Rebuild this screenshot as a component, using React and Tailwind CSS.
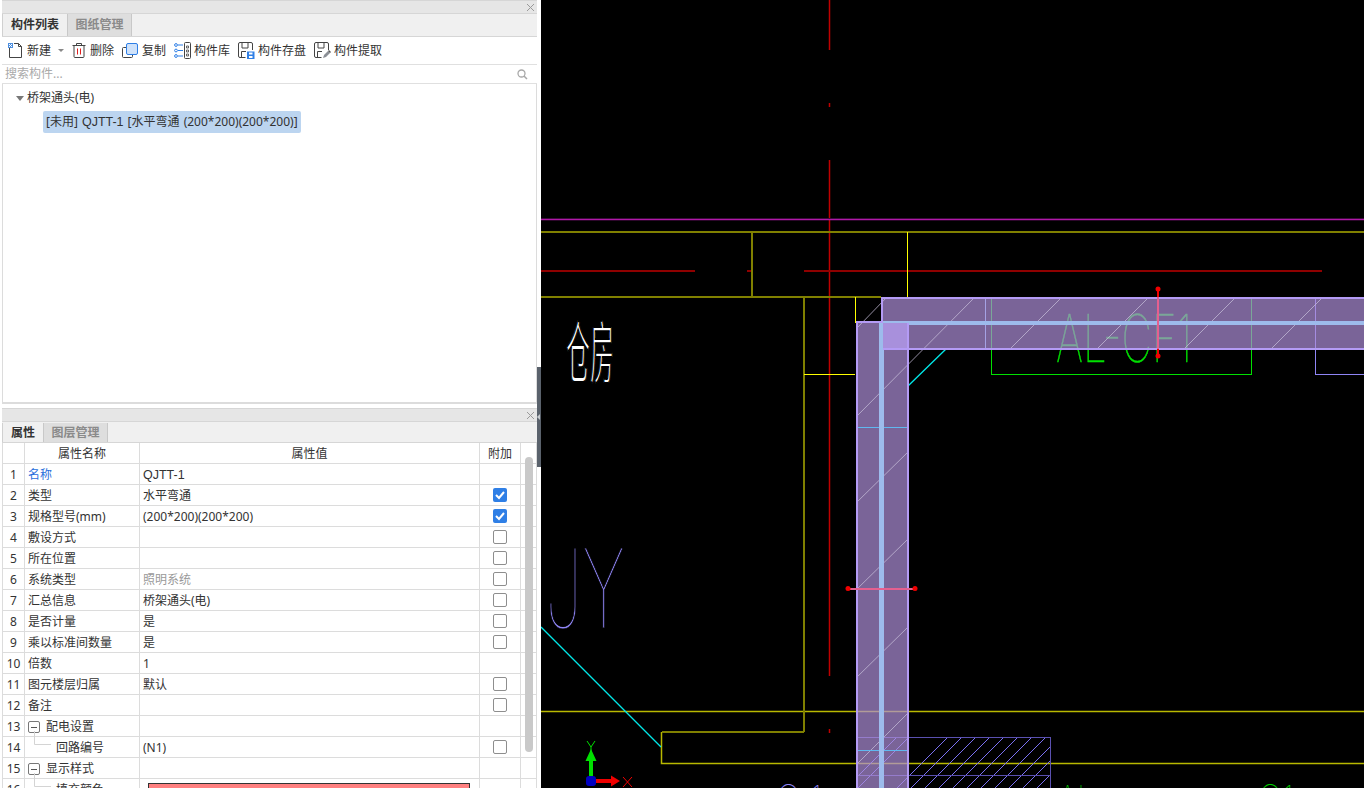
import React from "react";

const Latin = ({ children }) => (
  <span className="[font-family:'Liberation_Sans',sans-serif] text-[12.500px]">{children}</span>
);

const rows = [
  { n: 1, name: "名称", value: <Latin>QJTT-1</Latin>, blue: true },
  { n: 2, name: "类型", value: "水平弯通", check: "on" },
  { n: 3, name: "规格型号(mm)", value: "(200*200)(200*200)", check: "on" },
  { n: 4, name: "敷设方式", value: "", check: "off" },
  { n: 5, name: "所在位置", value: "", check: "off" },
  { n: 6, name: "系统类型", value: "照明系统", check: "off", gray: true },
  { n: 7, name: "汇总信息", value: "桥架通头(电)", check: "off" },
  { n: 8, name: "是否计量", value: "是", check: "off" },
  { n: 9, name: "乘以标准间数量", value: "是", check: "off" },
  { n: 10, name: "倍数", value: "1" },
  { n: 11, name: "图元楼层归属", value: "默认", check: "off" },
  { n: 12, name: "备注", value: "", check: "off" },
  { n: 13, name: "配电设置", value: "", group: true },
  { n: 14, name: "回路编号", value: "(N1)", check: "off", child: true },
  { n: 15, name: "显示样式", value: "", group: true },
  { n: 16, name: "填充颜色", value: "", child: true, swatch: true },
];

const NewIcon = () => (
  <svg width="17" height="17" viewBox="0 0 17 17" fill="none">
    <path d="M2.500 6v9.500h12V4.500L11.500 1.500H7" stroke="#444" />
    <path d="M11.500 1.500v3h3" stroke="#444" />
    <path d="M1 1h5v5H1z" fill="#4d8fe0" />
    <path d="M2 2h1v1H2zM4 2h1v1H4zM3 3h1v1H3zM2 4h1v1H2zM4 4h1v1H4z" fill="#fff" />
  </svg>
);

const TrashIcon = () => (
  <svg width="16" height="17" viewBox="0 0 15 17" fill="none">
    <path d="M1 3.500h13M5 3.500V1.500h5v2M2.500 3.500v11a1 1 0 0 0 1 1h8a1 1 0 0 0 1-1v-11" stroke="#444" />
    <path d="M6 6.500v6M9 6.500v6" stroke="#e02020" />
  </svg>
);

const CopyIcon = () => (
  <svg width="17" height="17" viewBox="0 0 17 17" fill="none">
    <path d="M4 5.500H1.500a1 1 0 0 0-1 1v8a1 1 0 0 0 1 1h8a1 1 0 0 0 1-1V13" stroke="#444" />
    <rect x="4.500" y="1.500" width="11" height="11" rx="1.500" fill="#cfe2fa" stroke="#2f7fe6" />
  </svg>
);

const LibraryIcon = () => (
  <svg width="17" height="17" viewBox="0 0 17 17" fill="none">
    <circle cx="2" cy="3" r="1.400" stroke="#2f7fe6" />
    <circle cx="2" cy="8.500" r="1.400" stroke="#2f7fe6" />
    <circle cx="2" cy="14" r="1.400" stroke="#2f7fe6" />
    <path d="M4 3h5M4 8.500h5M4 14h5" stroke="#2f7fe6" />
    <rect x="10.500" y="0.500" width="6" height="16" rx="1" stroke="#444" />
    <path d="M12.500 4h2v2h-2zM12.500 8h2v2h-2zM12.500 12h2v2h-2z" stroke="#444" strokeWidth="0.800" />
  </svg>
);

const SaveIcon = () => (
  <svg width="17" height="17" viewBox="0 0 17 17" fill="none">
    <path d="M7.500 15.500H2A1.500 1.500 0 0 1 .5 14V2A1.500 1.500 0 0 1 2 .5h11A1.500 1.500 0 0 1 14.500 2v6" stroke="#444" />
    <path d="M4 1v5h6V1M3.500 15V9.500H8" stroke="#444" />
    <path d="M9 9.500h7.500v7.500H9z" fill="#2f7fe6" />
    <path d="M11 10.500h3.500v2H11zM11 14h3.500v2H11z" fill="#fff" />
  </svg>
);

const ExtractIcon = () => (
  <svg width="17" height="17" viewBox="0 0 17 17" fill="none">
    <path d="M7.500 15.500H2A1.500 1.500 0 0 1 .5 14V2A1.500 1.500 0 0 1 2 .5h11A1.500 1.500 0 0 1 14.500 2v6" stroke="#444" />
    <path d="M4 1v5h6V1M3.500 15V9.500H8" stroke="#444" />
    <path d="M9 16l1-3 4-4 2 2-4 4z" fill="#8b8f96" />
    <path d="M14 9l1-1 2 2-1 1z" fill="#555" />
  </svg>
);

const tools = [
  { icon: <NewIcon />, label: "新建", w: "w-[31px]", caret: true },
  { icon: <TrashIcon />, label: "删除", w: "w-[32px]" },
  { icon: <CopyIcon />, label: "复制", w: "w-[32px]" },
  { icon: <LibraryIcon />, label: "构件库", w: "w-[44px]" },
  { icon: <SaveIcon />, label: "构件存盘", w: "w-[56px]" },
  { icon: <ExtractIcon />, label: "构件提取", w: "w-[56px]" },
];

const CloseX = () => (
  <svg width="9" height="9" viewBox="0 0 9 9" fill="none">
    <path d="M1 1l7 7M8 1l-7 7" stroke="#9a9a9a" />
  </svg>
);

const Checkbox = ({ on }) =>
  on ? (
    <div className="flex h-[14px] w-[14px] items-center justify-center rounded-[2px] bg-[#2f7fe6]">
      <svg width="12" height="12" viewBox="0 0 12 12" fill="none">
        <path d="M2 6l3 3 5-6" stroke="#fff" strokeWidth="2" />
      </svg>
    </div>
  ) : (
    <div className="h-[14px] w-[14px] rounded-[2px] border border-[#8e8e8e] bg-white" />
  );

const TitleBar = () => (
  <div className="flex h-[14px] shrink-0 items-center justify-end border-y border-[#d6d6d6] bg-[#e6e6e6] pr-[2px]">
    <CloseX />
  </div>
);

const PropRow = ({ row }) => (
  <div className="flex h-[21px] shrink-0 border-b border-[#dcdcdc] text-[12px] text-[#333]">
    <div className="flex w-[22px] shrink-0 items-center justify-center border-r border-[#dcdcdc] pt-[2px]">{row.n}</div>
    <div
      className={`relative flex w-[115px] shrink-0 items-center border-r border-[#dcdcdc] pt-[2px] ${row.child ? "pl-[31px]" : "pl-[3px]"} ${row.blue ? "text-[#2a6fdc]" : ""}`}
    >
      {row.group && (
        <span className="mr-[6px] flex h-[12px] w-[12px] items-center justify-center rounded-[2px] border border-[#777]">
          <span className="h-px w-[6px] bg-[#555]" />
        </span>
      )}
      {row.child && (
        <svg className="absolute left-[9px] top-[-6px]" width="20" height="18" viewBox="0 0 20 18" fill="none">
          <path d="M0.500 0v13.500H17" stroke="#d4d4d4" />
        </svg>
      )}
      {row.name}
    </div>
    <div className={`flex w-[340px] shrink-0 items-center border-r border-[#dcdcdc] pl-[3px] pt-[2px] ${row.gray ? "text-[#999]" : ""}`}>
      {row.swatch ? (
        <div className="ml-[5px] mt-[6px] h-[20px] w-[322px] shrink-0 border border-[#333] bg-[#ff8080]" />
      ) : (
        row.value
      )}
    </div>
    <div className="flex w-[41px] shrink-0 items-center justify-center border-r border-[#dcdcdc]">
      {row.check && <Checkbox on={row.check === "on"} />}
    </div>
  </div>
);

const ListPanel = () => (
  <section className="flex h-[404px] shrink-0 flex-col border-b-2 border-[#dcdcdc] bg-white">
    <TitleBar />
    <div className="flex h-[23px] shrink-0 border-b border-[#d6d6d6] bg-[#f0f0f0] text-[12px]">
      <div className="flex w-[65px] items-center justify-center border-l border-[#d0d0d0] font-bold text-[#333]">构件列表</div>
      <div className="flex w-[65px] items-center justify-center border-x border-[#c8c8c8] bg-[#dedede] font-bold text-[#8a8a8a]">图纸管理</div>
    </div>
    <div className="flex h-[28px] shrink-0 items-center border-b border-[#e0e0e0] pl-[5px] text-[12px] text-[#333]">
      {tools.map((t) => (
        <div key={t.label} className="flex items-center">
          {t.icon}
          <span className={`ml-[3px] ${t.w}`}>{t.label}</span>
          {t.caret && <span className="mr-[7px] h-0 w-0 border-x-[3px] border-t-[3px] border-x-transparent border-t-[#888]" />}
        </div>
      ))}
    </div>
    <div className="flex h-[19px] shrink-0 items-center justify-between border-b border-[#e0e0e0] pl-[3px] pr-[9px] text-[12px] text-[#aaa]">
      <span>搜索构件...</span>
      <svg width="11" height="11" viewBox="0 0 11 11" fill="none">
        <circle cx="4.500" cy="4.500" r="3.500" stroke="#a8a8a8" strokeWidth="1.300" />
        <path d="M7 7l3 3" stroke="#a8a8a8" strokeWidth="1.500" />
      </svg>
    </div>
    <div className="flex-1 border-x border-[#dcdcdc] text-[12px] text-[#333]">
      <div className="mt-[5px] flex h-[18px] items-center pl-[13px]">
        <span className="mr-[3px] h-0 w-0 border-x-[4px] border-t-[5px] border-x-transparent border-t-[#777]" />
        桥架通头(电)
      </div>
      <div className="ml-[40px] mt-[4px] flex h-[22px] w-[258px] items-center gap-[4px] rounded-[2px] bg-[#bcd5f0] pl-[3px] whitespace-nowrap">
        <span>[未用]</span>
        <Latin>QJTT-1</Latin>
        <span className="[word-spacing:1px]">[水平弯通 (200*200)(200*200)]</span>
      </div>
    </div>
  </section>
);

const PropsPanel = () => (
  <section className="mt-[4px] flex min-h-0 flex-1 flex-col overflow-hidden bg-white">
    <TitleBar />
    <div className="flex h-[21px] shrink-0 border-b border-[#d6d6d6] bg-[#f0f0f0] pt-px text-[12px]">
      <div className="flex w-[41px] items-center justify-center border-l border-[#d0d0d0] font-bold text-[#333]">属性</div>
      <div className="flex w-[65px] items-center justify-center border-x border-[#c8c8c8] bg-[#dedede] font-bold text-[#8a8a8a]">图层管理</div>
    </div>
    <div className="relative flex-1 overflow-hidden border-x border-[#dcdcdc]">
      <div className="flex h-[21px] border-b border-[#dcdcdc] text-[12px] text-[#333]">
        <div className="w-[22px] shrink-0 border-r border-[#dcdcdc]" />
        <div className="flex w-[115px] shrink-0 items-center justify-center border-r border-[#dcdcdc] pt-[2px]">属性名称</div>
        <div className="flex w-[340px] shrink-0 items-center justify-center border-r border-[#dcdcdc] pt-[2px]">属性值</div>
        <div className="flex w-[41px] shrink-0 items-center justify-center border-r border-[#dcdcdc] pt-[2px]">附加</div>
      </div>
      {rows.map((row) => (
        <PropRow key={row.n} row={row} />
      ))}
      <div className="absolute left-[522px] top-[14px] h-[295px] w-[8px] rounded-[4px] bg-[#c9c9c9]" />
    </div>
  </section>
);

const trayHatch = [
  [857, 328, 887, 297],
  [857, 416, 975, 297],
  [1011, 348, 1062, 297],
  [1098, 348, 1149, 297],
  [1185, 348, 1236, 297],
  [1272, 348, 1323, 297],
  [856, 503, 908, 452],
  [856, 590, 908, 539],
  [856, 678, 908, 627],
  [856, 765, 908, 713],
];

const blockHatch = [
  [856, 778, 897, 737],
  [856, 790, 909, 737],
  [895, 790, 948, 737],
  [909, 776, 948, 737],
  [909, 790, 962, 737],
  [923, 790, 976, 737],
  [937, 790, 990, 737],
  [951, 790, 1004, 737],
  [965, 790, 1018, 737],
  [979, 790, 1032, 737],
  [993, 790, 1046, 737],
  [1007, 790, 1050, 747],
  [1021, 790, 1050, 761],
  [1035, 790, 1050, 775],
];

const Drawing = () => (
  <svg className="block h-[788px] w-[823px]" viewBox="541 0 823 788" shapeRendering="crispEdges">
    <g fill="none" shapeRendering="auto">
      <path d="M829.500 0v50M829.500 103v4M829.500 160v516M829.500 729v4" stroke="#c00000" strokeWidth="1.500" />
      <path d="M541 219.500h823" stroke="#b018a8" strokeWidth="1.500" />
      <path d="M541 711.500h823M661.500 732v31.500H1364" stroke="#b8b800" strokeWidth="1.500" />
    </g>
    <g fill="none">
      <path d="M541 218h823" stroke="#3c0a3c" />
      <path d="M541 271h154M747 271h5M804 271h518" stroke="#8f0000" strokeWidth="2" />
      <path d="M541 232h823M752 232v65M541 297h340M804 297v435M662 732h142" stroke="#808000" strokeWidth="2" />
      <path d="M907.500 232v65M855.500 297v26M804 374.500h51" stroke="#ffff00" />
      <path d="M991.500 297v77.500h260V297" stroke="#00e000" />
      <path d="M1315.500 297v77.500h49" stroke="#8f85f5" />
      <path d="M985.500 297v51" stroke="#8fd0ff" />
    </g>
    <g shapeRendering="auto" fill="none">
      <path d="M541 627l120 120M908 386l38-37" stroke="#00e8e8" strokeWidth="1.300" />
      {blockHatch.map(([a, b, c, d]) => (
        <line key={`${a}-${b}`} x1={a} y1={b} x2={c} y2={d} stroke="#7a70f0" />
      ))}
    </g>
    <path d="M856 737.500h194.500V788M856 775.500h194" fill="none" stroke="#5a50b0" strokeWidth="1.500" />
    <g fontFamily="Inter, 'Liberation Sans', sans-serif" fontWeight="100" shapeRendering="auto">
      <text x="1056" y="362" fontSize="66" fill="#00e000" stroke="#00e000" strokeWidth="0.600" textLength="136" lengthAdjust="spacingAndGlyphs">AL-CF1</text>
      <text x="1058" y="814" fontSize="40" fill="#00d000" textLength="36" lengthAdjust="spacingAndGlyphs">AL</text>
      <text x="1258" y="814" fontSize="40" fill="#00d000" textLength="36" lengthAdjust="spacingAndGlyphs">C1</text>
      <text x="776" y="814" fontSize="40" fill="#8f85f5" textLength="46" lengthAdjust="spacingAndGlyphs">C 1</text>
      <text x="545" y="628" fontSize="110" fill="#8f85f5" stroke="#000" strokeWidth="1" textLength="80" lengthAdjust="spacingAndGlyphs">JY</text>
    </g>
    <text x="566" y="378" fontFamily="'Noto Sans CJK SC', sans-serif" fontSize="68" fill="#ffffff" stroke="#000" strokeWidth="2" textLength="48" lengthAdjust="spacingAndGlyphs">仓房</text>
    <g>
      <rect x="856" y="322" width="52" height="466" fill="#ae8fd9" fillOpacity="0.7" />
      <rect x="908" y="297" width="456" height="52" fill="#ae8fd9" fillOpacity="0.7" />
      <rect x="881" y="297" width="27" height="25" fill="#ae8fd9" fillOpacity="0.7" />
      <g shapeRendering="auto">
        {trayHatch.map(([a, b, c, d]) => (
          <line key={`${a}-${b}`} x1={a} y1={b} x2={c} y2={d} stroke="#c5bcd8" strokeOpacity="0.75" />
        ))}
      </g>
      <path d="M856 427h52M856 750h52" stroke="#60b8f0" />
      <path d="M883 323h481" stroke="#9dbbec" strokeWidth="4" />
      <path d="M881.500 322v466" stroke="#9dbbec" strokeWidth="5" />
      <rect x="883" y="323" width="25" height="25" fill="#a890dc" />
      <path d="M1364 297.500H881.500V322H856.500V788M907.500 788V349M908 348.500H1364M883 348.500h25M907.500 323v25" fill="none" stroke="#b49bf5" strokeWidth="2" />
    </g>
    <g>
      <path d="M1158 289v67M848 588.500h67" stroke="#e4608f" strokeWidth="2" />
      <path d="M1158 289v8M1158 349v7" stroke="#f00000" strokeWidth="2" />
      <g shapeRendering="auto" fill="#f00000">
        <circle cx="1158" cy="289" r="2.500" />
        <circle cx="1158" cy="356" r="2.500" />
        <circle cx="848" cy="588.500" r="2.500" />
        <circle cx="915" cy="588.500" r="2.500" />
      </g>
    </g>
    <g shapeRendering="auto">
      <path d="M589 781v-20h-3.500l5.500-12 5.500 12H593v20z" fill="#00e000" />
      <path d="M591 779h20v-3.500l9 5.500-9 5.500V783h-20z" fill="#f00000" />
      <rect x="586" y="776" width="10" height="10" rx="3" fill="#0000c0" />
      <path d="M587 741l4 6 4-6M591 747v6" fill="none" stroke="#00e000" />
      <path d="M623 777l9 10M632 777l-9 10" fill="none" stroke="#f00000" />
    </g>
  </svg>
);

export default function App() {
  return (
    <div className="flex h-[788px] w-[1364px] overflow-hidden bg-white [font-family:'Noto_Sans','Noto_Sans_CJK_SC',sans-serif]">
      <aside className="ml-[2px] flex h-full w-[535px] shrink-0 flex-col">
        <ListPanel />
        <PropsPanel />
      </aside>
      <div className="w-[4px] shrink-0 pt-[367px]">
        <div className="flex h-[100px] items-center bg-[#5a626c]">
          <span className="h-0 w-0 border-y-[3px] border-r-[3px] border-y-transparent border-r-[#c8ccd0]" />
        </div>
      </div>
      <main className="flex-1 bg-black">
        <Drawing />
      </main>
    </div>
  );
}
